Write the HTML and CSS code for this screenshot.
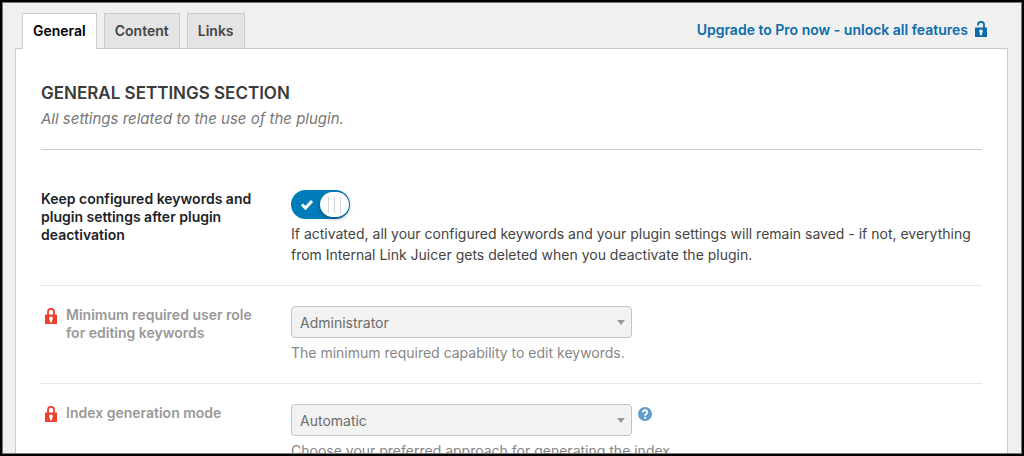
FILE: index.html
```html
<!DOCTYPE html>
<html lang="en">
<head>
    <meta charset="UTF-8">
    <meta name="viewport" content="width=device-width, initial-scale=1.0">
    <title>Internal Link Juicer - Settings</title>
    <link rel="stylesheet" href="styles.css">
</head>
<body>
    <div class="frame">
        <header class="top-bar">
            <nav class="tabs">
                <a class="tab active" href="#general">General</a>
                <a class="tab" href="#content">Content</a>
                <a class="tab" href="#links">Links</a>
            </nav>
            <a class="upgrade" href="#upgrade">
                <span>Upgrade to Pro now - unlock all features</span>
                <svg class="lock" viewBox="0 0 12 16" aria-hidden="true">
                    <path d="M3 4.500V3.800a3 3 0 0 1 6 0V7" fill="none" stroke="currentColor" stroke-width="1.8"/>
                    <path fill="currentColor" fill-rule="evenodd" d="M.5 6.500h11a.5.5 0 0 1 .5.5v8.500a.5.5 0 0 1-.5.5H.5a.5.5 0 0 1-.5-.5V7a.5.5 0 0 1 .5-.5zM6 8.500a1.900 1.900 0 0 0-1.100 3.400V14.200h2.200v-2.300A1.900 1.900 0 0 0 6 8.500z"/>
                </svg>
            </a>
        </header>

        <main class="panel" id="general">
            <div class="section-head">
                <h2>GENERAL SETTINGS SECTION</h2>
                <p>All settings related to the use of the plugin.</p>
            </div>

            <form class="settings">
                <div class="row">
                    <label class="name" for="keep-settings">Keep configured keywords and plugin settings after plugin deactivation</label>
                    <div class="field">
                        <div class="toggle">
                            <input type="checkbox" id="keep-settings" checked>
                            <svg class="check" viewBox="0 0 14 12" aria-hidden="true">
                                <path d="M2 5.500l3.500 3.500L12 2" fill="none" stroke="#fff" stroke-width="3"/>
                            </svg>
                            <span class="knob"><i></i><i></i><i></i></span>
                        </div>
                        <p class="description">If activated, all your configured keywords and your plugin settings will remain saved - if not, everything from Internal Link Juicer gets deleted when you deactivate the plugin.</p>
                    </div>
                </div>

                <div class="row locked">
                    <label class="name" for="user-role">
                        <svg class="lock" viewBox="0 0 12 16" aria-hidden="true">
                            <path d="M3 7V3.800a3 3 0 0 1 6 0V7" fill="none" stroke="currentColor" stroke-width="1.8"/>
                            <path fill="currentColor" fill-rule="evenodd" d="M.5 6.500h11a.5.5 0 0 1 .5.5v8.500a.5.5 0 0 1-.5.5H.5a.5.5 0 0 1-.5-.5V7a.5.5 0 0 1 .5-.5zM6 8.500a1.900 1.900 0 0 0-1.100 3.400V14.200h2.200v-2.300A1.900 1.900 0 0 0 6 8.500z"/>
                        </svg>
                        <span>Minimum required user role for editing keywords</span>
                    </label>
                    <div class="field">
                        <div class="select-line">
                            <div class="select-box">
                                <select id="user-role" disabled>
                                    <option>Administrator</option>
                                </select>
                            </div>
                        </div>
                        <p class="description">The minimum required capability to edit keywords.</p>
                    </div>
                </div>

                <div class="row locked">
                    <label class="name" for="index-mode">
                        <svg class="lock" viewBox="0 0 12 16" aria-hidden="true">
                            <path d="M3 7V3.800a3 3 0 0 1 6 0V7" fill="none" stroke="currentColor" stroke-width="1.8"/>
                            <path fill="currentColor" fill-rule="evenodd" d="M.5 6.500h11a.5.5 0 0 1 .5.5v8.500a.5.5 0 0 1-.5.5H.5a.5.5 0 0 1-.5-.5V7a.5.5 0 0 1 .5-.5zM6 8.500a1.900 1.900 0 0 0-1.100 3.400V14.200h2.200v-2.300A1.900 1.900 0 0 0 6 8.500z"/>
                        </svg>
                        <span>Index generation mode</span>
                    </label>
                    <div class="field">
                        <div class="select-line">
                            <div class="select-box">
                                <select id="index-mode" disabled>
                                    <option>Automatic</option>
                                </select>
                            </div>
                            <a class="help" href="#help" aria-label="Help">
                                <svg viewBox="0 0 14 14" aria-hidden="true">
                                    <circle cx="7" cy="7" r="7" fill="#5f9fca"/>
                                    <path d="M4.800 5.400a2.200 2.100 0 1 1 3.500 1.600c-.8.6-1.300.8-1.300 1.700" fill="none" stroke="#fff" stroke-width="1.8"/>
                                    <circle cx="7" cy="10.800" r="1.100" fill="#fff"/>
                                </svg>
                            </a>
                        </div>
                        <p class="description">Choose your preferred approach for generating the index.</p>
                    </div>
                </div>
            </form>
        </main>
    </div>
</body>
</html>
```
FILE: styles.css
```css
* {
    box-sizing: border-box;
}
body {
    height: 100vh;
    margin: 0;
    padding: 2px;
    font-family: Inter, "Liberation Sans", sans-serif;
    font-size: 14px;
    color: #444;
    background-color: #000;
}
a {
    text-decoration: none;
}
h2, p {
    margin: 0;
}
.frame {
    height: 100%;
    overflow: hidden;
    padding: 10px 13px 0 12px;
    border: 1px solid #777;
    background-color: #f0f0f0;
}

/* tabs */
.top-bar {
    display: flex;
    justify-content: space-between;
    align-items: flex-start;
    padding: 0 21px 0 7px;
}
.tabs {
    display: flex;
    gap: 7px;
}
.tab {
    height: 35px;
    padding: 0 10px;
    border: 1px solid #c9cbce;
    border-bottom: none;
    background-color: #e4e4e4;
    color: #444;
    font-weight: 600;
    line-height: 34px;
}
.tab.active {
    position: relative;
    height: 36px;
    margin-bottom: -1px;
    background-color: #fff;
    color: #000;
}
.upgrade {
    display: flex;
    align-items: center;
    gap: 7px;
    height: 32px;
    color: #0a6cab;
    font-weight: 600;
}
.lock {
    flex: none;
    width: 12px;
    height: 16px;
}

/* panel */
.panel {
    min-height: 100%;
    padding: 32px 25px;
    border: 1px solid #c9cbce;
    background-color: #fff;
}
.section-head {
    padding-bottom: 16px;
    border-bottom: 1px solid #ccc;
}
.section-head h2 {
    color: #3a3a3a;
    font-size: 17px;
    font-weight: 600;
    line-height: 24px;
}
.section-head p {
    color: #777;
    font-size: 15px;
    font-style: italic;
    line-height: 28px;
}
.settings {
    padding-top: 20px;
}
.row {
    display: grid;
    grid-template-columns: 220px 1fr;
    gap: 30px;
    padding: 20px 0;
    border-bottom: 1px solid #e6e6e6;
}
.name {
    color: #1d2327;
    font-weight: 600;
    line-height: 18px;
}
.description {
    margin-top: 4px;
    line-height: 21px;
}
.locked .name {
    display: flex;
    align-items: flex-start;
    gap: 9px;
    padding-left: 4px;
    color: #999;
}
.locked .lock {
    margin-top: 2px;
    color: #f0402f;
}
.locked .description {
    color: #868686;
}

/* toggle */
.toggle {
    display: flex;
    align-items: center;
    justify-content: space-between;
    position: relative;
    width: 59px;
    height: 29px;
    padding: 0 1px 0 9px;
    border-radius: 15px;
    background-color: #007cba;
}
.toggle input {
    position: absolute;
    inset: 0;
    width: 100%;
    height: 100%;
    margin: 0;
    opacity: 0;
    cursor: pointer;
}
.check {
    width: 14px;
    height: 12px;
}
.knob {
    display: flex;
    align-items: center;
    justify-content: center;
    gap: 5px;
    width: 29px;
    height: 25px;
    border-radius: 14px;
    background-color: #fff;
    box-shadow: 0 2px 4px rgba(0, 0, 0, 0.3);
    pointer-events: none;
}
.knob i {
    width: 1px;
    height: 16px;
    background-color: #d4d4d4;
}

/* selects */
.select-line {
    display: flex;
    align-items: flex-start;
    gap: 6px;
}
.select-box {
    position: relative;
    width: 341px;
    height: 32px;
}
.select-box::after {
    content: "";
    position: absolute;
    top: 14px;
    right: 7px;
    border: 4px solid transparent;
    border-top: 5px solid #999;
    border-bottom: none;
}
select {
    width: 100%;
    height: 32px;
    padding: 0 8px;
    border: 1px solid #c3c3c3;
    border-radius: 4px;
    appearance: none;
    background-color: #f2f2f2;
    color: #6c6c6c;
    font: inherit;
    opacity: 1;
}
.help {
    display: flex;
    margin-top: 3px;
}
.help svg {
    width: 14px;
    height: 14px;
}
```
